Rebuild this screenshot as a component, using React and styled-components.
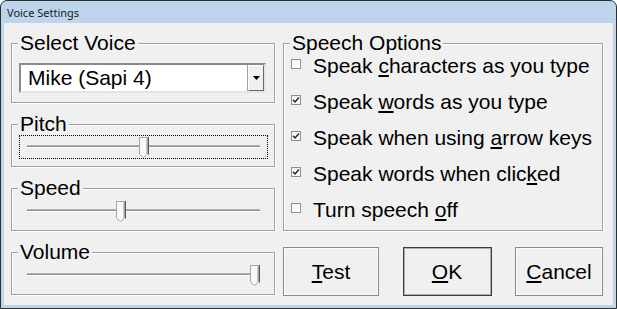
import React from 'react'
import styled, { createGlobalStyle } from 'styled-components'

const GlobalStyle = createGlobalStyle`
  html, body {
    margin: 0;
    padding: 0;
    background: #ffffff;
  }
`

const voices = ['Mike (Sapi 4)']

const sliders = [
  { label: 'Pitch', value: 50, focused: true },
  { label: 'Speed', value: 40 },
  { label: 'Volume', value: 100 },
]

const options = [
  { before: 'Speak ', key: 'c', after: 'haracters as you type', checked: false },
  { before: 'Speak ', key: 'w', after: 'ords as you type', checked: true },
  { before: 'Speak when using ', key: 'a', after: 'rrow keys', checked: true },
  { before: 'Speak words when clic', key: 'k', after: 'ed', checked: true },
  { before: 'Turn speech ', key: 'o', after: 'ff', checked: false },
]

const buttons = [
  { key: 'T', rest: 'est', width: 96 },
  { key: 'O', rest: 'K', width: 89, isDefault: true },
  { key: 'C', rest: 'ancel', width: 88 },
]

const ThumbIcon = () => (
  <svg width="10" height="21" viewBox="0 0 10 21">
    <path d="M0.5 0.5H8.5V17L4.5 20.5L0.5 17Z" fill="#f9f9f9" stroke="#a5a5a5" />
    <path d="M9.5 0V17.5" stroke="#555" />
    <path d="M7.5 1.5V17" stroke="#c8c8c8" />
  </svg>
)

const CheckIcon = () => (
  <svg width="8" height="8" viewBox="0 0 8 8">
    <path d="M1 3.8L3 6L7 1.5" fill="none" stroke="#222" strokeWidth="1.4" />
  </svg>
)

const Slider = ({ value, focused }) => (
  <SliderBox $focused={focused}>
    <Track>
      <Lane>
        <Thumb style={{ left: `${value}%` }}>
          <ThumbIcon />
        </Thumb>
      </Lane>
    </Track>
  </SliderBox>
)

const App = () => {
  return (
    <>
      <GlobalStyle />
      <Window>
        <TitleBar>Voice Settings</TitleBar>
        <Body>
          <LeftColumn>
            <Group $height={60}>
              <Caption>Select Voice</Caption>
              <Combo>
                <ComboText>{voices[0]}</ComboText>
                <DropButton>
                  <svg width="7" height="4" viewBox="0 0 7 4">
                    <path d="M0 0H7L3.5 4Z" fill="#000" />
                  </svg>
                </DropButton>
              </Combo>
            </Group>
            {sliders.map((s) => (
              <Group key={s.label} $height={43}>
                <Caption>{s.label}</Caption>
                <Slider value={s.value} focused={s.focused} />
              </Group>
            ))}
          </LeftColumn>
          <RightColumn>
            <Group $height={188}>
              <Caption>Speech Options</Caption>
              <OptionList>
                {options.map((o) => (
                  <Option key={o.after}>
                    <Box>{o.checked && <CheckIcon />}</Box>
                    <span>
                      {o.before}
                      <u>{o.key}</u>
                      {o.after}
                    </span>
                  </Option>
                ))}
              </OptionList>
            </Group>
            <ButtonRow>
              {buttons.map((b) => (
                <Button key={b.rest} $width={b.width} $default={b.isDefault}>
                  <u>{b.key}</u>
                  {b.rest}
                </Button>
              ))}
            </ButtonRow>
          </RightColumn>
        </Body>
      </Window>
    </>
  )
}

const Window = styled.div`
  width: 617px;
  height: 309px;
  box-sizing: border-box;
  border: 1px solid #2e2e2e;
  border-radius: 7px 7px 0 0;
  background: #bcd4ec;
  display: flex;
  flex-direction: column;
  overflow: hidden;
  font-family: 'Liberation Sans', Arial, sans-serif;
  color: #000;
`

const TitleBar = styled.div`
  height: 22px;
  flex: none;
  padding-left: 6px;
  display: flex;
  align-items: center;
  font-family: 'Noto Sans', 'Liberation Sans', sans-serif;
  font-size: 11px;
  color: #1a1a1a;
`

const Body = styled.div`
  flex: 1;
  margin: 0 3px 3px 3px;
  background: #f0f0f0;
  display: flex;
  gap: 8px;
  padding: 20px 10px 0 7px;
`

const LeftColumn = styled.div`
  width: 264px;
  display: flex;
  flex-direction: column;
  gap: 21px;
`

const RightColumn = styled.div`
  width: 320px;
  display: flex;
  flex-direction: column;
  gap: 16px;
`

const Group = styled.div`
  box-sizing: border-box;
  height: ${(p) => p.$height}px;
  border: 1px solid #a0a0a0;
  box-shadow: inset 1px 1px 0 #fff, 1px 1px 0 #fff;
  padding: 0 6px 0 7px;
  display: flex;
  flex-direction: column;
  align-items: flex-start;
`

const Caption = styled.div`
  margin: -12px 0 0 -1px;
  padding: 0 2px;
  background: #f0f0f0;
  font-size: 21px;
  line-height: 22px;
  white-space: nowrap;
`

const Combo = styled.div`
  box-sizing: border-box;
  margin-top: 9px;
  width: 247px;
  height: 30px;
  border: 2px solid;
  border-color: #8a8a8a #e4e4e4 #e4e4e4 #8a8a8a;
  background: #fff;
  display: flex;
  align-items: center;
`

const ComboText = styled.div`
  flex: 1;
  padding-left: 7px;
  font-size: 21px;
  line-height: 24px;
`

const DropButton = styled.div`
  box-sizing: border-box;
  width: 16px;
  height: 100%;
  background: #f0f0f0;
  border: 1px solid;
  border-color: #fff #696969 #696969 #fff;
  box-shadow: -1px 0 0 #a0a0a0;
  display: flex;
  align-items: center;
  justify-content: center;
`

const SliderBox = styled.div`
  box-sizing: border-box;
  width: 249px;
  height: 24px;
  border: 1px ${(p) => (p.$focused ? 'dotted #000' : 'solid transparent')};
  padding: 9px 7px 0;
`

const Track = styled.div`
  position: relative;
  height: 1px;
  background: #8c8c8c;
  border-top: 1px solid #b4b4b4;
  border-bottom: 1px solid #ffffff;
`

const Lane = styled.div`
  position: absolute;
  top: 0;
  bottom: 0;
  left: 5px;
  right: 5px;
`

const Thumb = styled.div`
  position: absolute;
  top: -9px;
  width: 10px;
  height: 21px;
  transform: translateX(-50%);
  line-height: 0;
`

const OptionList = styled.div`
  display: flex;
  flex-direction: column;
  gap: 12px;
  width: 100%;
`

const Option = styled.div`
  display: flex;
  align-items: center;
  gap: 12px;
  height: 24px;
  font-size: 21px;
  line-height: 24px;
  white-space: nowrap;
`

const Box = styled.div`
  box-sizing: border-box;
  width: 10px;
  height: 10px;
  margin-bottom: 4px;
  border: 1px solid #8e8f8f;
  background: linear-gradient(135deg, #f4f4f4, #ffffff);
  display: flex;
  align-items: center;
  justify-content: center;
`

const ButtonRow = styled.div`
  display: flex;
  justify-content: space-between;
`

const Button = styled.button`
  box-sizing: border-box;
  width: ${(p) => p.$width}px;
  height: 49px;
  padding: 0;
  border: 1px solid ${(p) => (p.$default ? '#3c3c3c' : '#8a8a8a')};
  box-shadow: ${(p) => (p.$default ? 'inset 0 0 0 1px #adadad' : 'inset 0 0 0 1px #fbfbfb')};
  background: #f0f0f0;
  font-family: 'Liberation Sans', Arial, sans-serif;
  font-size: 21px;
  color: #000;
  cursor: pointer;
`

export default App
